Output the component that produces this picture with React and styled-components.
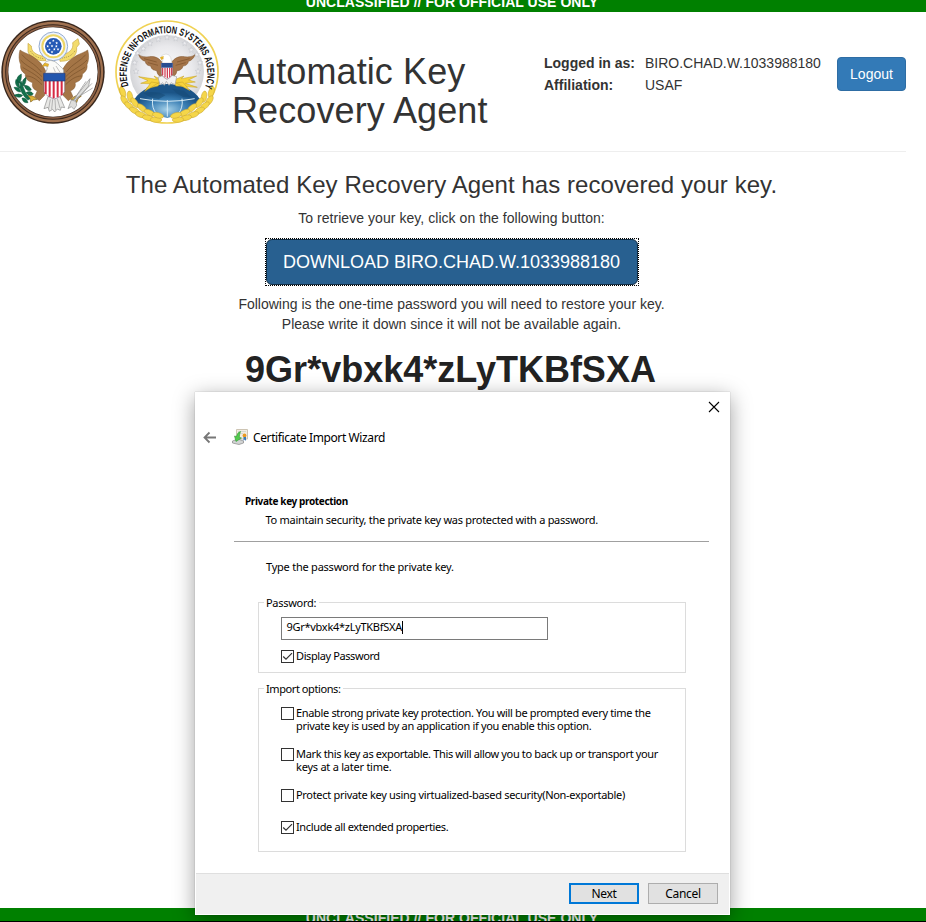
import React from 'react';
import styled, { createGlobalStyle, css } from 'styled-components';

const GlobalStyle = createGlobalStyle`
  * { box-sizing: border-box; }
  html, body { margin: 0; padding: 0; background: #fff; overflow: hidden; }
  body { font-family: "Liberation Sans", Arial, sans-serif; font-size: 14px; line-height: 20px; color: #333; }
`;

const Screen = styled.div`
  position: relative;
  width: 926px;
  height: 922px;
  overflow: hidden;
  display: flex;
  flex-direction: column;
  border-bottom: 1px solid #000;
`;

const Banner = styled.div`
  flex: none;
  height: 20px;
  margin-top: ${(p) => (p.$bottom ? 'auto' : '-8px')};
  margin-bottom: ${(p) => (p.$bottom ? '-7px' : '0')};
  padding-right: 22px;
  background: #008000;
  color: #fff;
  font-weight: bold;
  text-align: center;
  letter-spacing: 0.04px;
`;

const Header = styled.header`
  flex: none;
  display: flex;
  align-items: flex-start;
  width: 906px;
  height: 140px;
  padding: 8px 0 0 1px;
  border-bottom: 1px solid #eee;
`;

const Seals = styled.div`
  display: flex;
  gap: 10px;
  svg { display: block; width: 104px; height: 104px; }
`;

const Title = styled.h1`
  width: 310px;
  margin: 32px 0 0 13px;
  font-size: 36px;
  line-height: 39px;
  font-weight: normal;
  letter-spacing: 0.1px;
`;

const Account = styled.dl`
  display: grid;
  grid-template-columns: 101px 180px;
  row-gap: 2px;
  margin: 33px 0 0 2px;
`;
const Term = styled.dt`font-weight: bold;`;
const Detail = styled.dd`margin: 0;`;

const LogoutButton = styled.button`
  width: 69px;
  height: 34px;
  margin: 37px 0 0 auto;
  padding: 0;
  border: 1px solid #2e6da4;
  border-radius: 4px;
  background: #337ab7;
  color: #fff;
  font: 14px/20px "Liberation Sans", Arial, sans-serif;
`;

const Main = styled.main`
  flex: none;
  display: flex;
  flex-direction: column;
  align-items: center;
  width: 903px;
`;
const Headline = styled.h3`
  margin: 20px 0 10px;
  font-size: 24px;
  line-height: 26px;
  font-weight: normal;
  letter-spacing: 0.06px;
  white-space: nowrap;
`;
const Copy = styled.p`
  margin: 0;
  text-align: center;
  letter-spacing: ${(p) => p.$spacing || '0'};
`;
const FocusRing = styled.div`
  margin: 10px 0 8px;
  border: 1px dotted #000;
`;
const DownloadButton = styled.button`
  display: block;
  width: 372px;
  height: 46px;
  padding: 0;
  border: 1px solid #122b40;
  border-radius: 6px;
  background: #286090;
  color: #fff;
  font: 18px/24px "Liberation Sans", Arial, sans-serif;
`;
const OneTimePassword = styled.div`
  margin: 16px 2px 0 0;
  font-size: 36px;
  line-height: 40px;
  font-weight: bold;
  color: #222;
`;

const Dialog = styled.section`
  position: absolute;
  left: 195px;
  top: 392px;
  width: 535px;
  height: 523px;
  display: flex;
  flex-direction: column;
  padding: 0 1px 1px;
  background: #fff;
  box-shadow: 0 0 1px rgba(0, 0, 0, 0.3), 0 5px 20px rgba(0, 0, 0, 0.38);
  color: #000;
  font-family: "Noto Sans", "Open Sans", sans-serif;
  font-size: 11px;
  line-height: 13px;
`;
const CloseRow = styled.div`
  display: flex;
  justify-content: flex-end;
  height: 32px;
  padding: 9px 9px 0 0;
`;
const WizardTitle = styled.div`
  display: flex;
  align-items: center;
  height: 26px;
  padding-left: 7px;
  font-size: 12px;
  letter-spacing: -0.39px;
  white-space: nowrap;
`;
const BackIcon = styled.svg`width: 13px; height: 13px; margin-right: 16px;`;
const WizardIcon = styled.svg`width: 16px; height: 16px; margin-right: 5px;`;
const Intro = styled.div`
  width: 475px;
  height: 92px;
  margin-left: 38px;
  padding: 45px 0 0 11px;
  border-bottom: 1px solid #a0a0a0;
`;
const StepTitle = styled.h2`
  margin: 0 0 5px;
  font-size: 10px;
  line-height: 13px;
  font-weight: bold;
  letter-spacing: -0.37px;
`;
const line = css`
  display: block;
  white-space: nowrap;
  letter-spacing: ${(p) => p.$spacing || 0}px;
`;
const Line = styled.span`${line}`;
const Indented = styled.div`padding-left: ${(p) => p.$by}px;`;
const Prompt = styled.div`height: 32px; padding: 18px 0 0 70px;`;

const Group = styled.div`
  display: flex;
  flex-direction: column;
  width: 428px;
  height: ${(p) => p.$height}px;
  margin: ${(p) => p.$top}px 0 0 62px;
  padding-left: 22px;
  border: 1px solid #dcdcdc;
`;
const GroupLabel = styled.div`
  flex: none;
  align-self: flex-start;
  margin: -7px 0 0 -17px;
  padding: 0 3px 0 2px;
  background: #fff;
  ${line}
`;
const PasswordField = styled.div`
  flex: none;
  display: flex;
  align-items: flex-start;
  width: 267px;
  height: 23px;
  margin-top: 8px;
  padding: 2px 0 0 4.5px;
  border: 1px solid #7a7a7a;
`;
const Caret = styled.span`width: 1px; height: 13px; margin-top: 1px; background: #000;`;
const Option = styled.label`
  flex: none;
  display: flex;
  gap: 2px;
  height: ${(p) => p.$height || 26}px;
  margin-top: ${(p) => p.$top}px;
`;
const Box = styled.span`
  flex: none;
  display: block;
  width: 13px;
  height: 13px;
  margin-top: 1px;
  border: 1px solid #333;
  background: #fff;
  svg { display: block; width: 11px; height: 11px; }
`;
const Actions = styled.footer`
  display: flex;
  justify-content: flex-end;
  gap: 9px;
  height: 41px;
  margin-top: auto;
  padding: 9px 11px 0 0;
  border-top: 1px solid #dfdfdf;
  background: #f0f0f0;
`;
const DialogButton = styled.button`
  width: 70px;
  height: 21px;
  padding: 0;
  border: ${(p) => (p.$primary ? '2px solid #0078d7' : '1px solid #adadad')};
  background: #e1e1e1;
  color: #000;
  font: 12px/15px "Noto Sans", "Open Sans", sans-serif;
  letter-spacing: -0.3px;
`;

function CheckBox({ checked }) {
  return (
    <Box>
      {checked && (
        <svg viewBox="0 0 11 11" fill="none" stroke="#333" strokeWidth="1.2">
          <path d="M1.200 5.500 4 8.200 10 2.200" />
        </svg>
      )}
    </Box>
  );
}

function star(cx, cy, r) {
  return Array.from({ length: 10 }, (_, i) => {
    const a = (i * Math.PI) / 5 - Math.PI / 2;
    const d = i % 2 ? r * 0.42 : r;
    return `${(cx + d * Math.cos(a)).toFixed(1)},${(cy + d * Math.sin(a)).toFixed(1)}`;
  }).join(' ');
}

function GreatSeal() {
  const wing = 'M140 222C132 196 116 180 92 166C80 160 68 156 60 150C56 164 56 182 62 194C60 206 66 216 76 222C74 234 84 244 98 248C94 260 102 270 112 272L104 290L118 302L134 286Z';
  const feathers = 'M66 164C82 184 104 190 124 216M62 180C80 200 100 204 126 230M68 202C86 214 104 220 126 242M78 228C94 228 108 236 126 254';
  return (
    <svg viewBox="3 60 312 312" role="img" aria-label="Great Seal">
      <circle cx="159" cy="216" r="155" fill="#37261c" />
      <circle cx="159" cy="216" r="147" fill="none" stroke="#a0714f" strokeWidth="7" />
      <circle cx="159" cy="216" r="138" fill="none" stroke="#8c6045" strokeWidth="5" />
      <circle cx="159" cy="216" r="134" fill="#fff" />
      <path d="M84 130L94 138C94 154 104 164 134 170L138 182C108 184 88 172 84 154ZM234 116L218 128C222 148 208 160 178 168L180 184C214 184 232 168 230 142L238 132Z" fill="#f3dc6c" stroke="#c9a742" strokeWidth="2" />
      <path d="M92 154C100 168 114 174 132 176M186 174C204 172 218 166 226 150" fill="none" stroke="#8d7c3c" strokeWidth="2" strokeDasharray="3 3" />
      <circle cx="160" cy="139" r="43" fill="#edf3fb" stroke="#94acd0" strokeWidth="3" />
      <circle cx="160" cy="139" r="33" fill="#fff" stroke="#ecd566" strokeWidth="6" />
      <circle cx="160" cy="139" r="25" fill="#2459b5" />
      {[[160, 122], [150, 129], [170, 129], [143, 139], [156, 138], [169, 139], [148, 149], [163, 148], [174, 148], [156, 156]].map(([x, y]) => (
        <polygon key={`${x}-${y}`} points={star(x, y, 4.5)} fill="#fff" />
      ))}
      <path d={wing} fill="#a47546" stroke="#80582f" strokeWidth="1.5" />
      <path d={feathers} fill="none" stroke="#775029" strokeWidth="2" />
      <g transform="translate(323 0) scale(-1 1)">
        <path d={wing} fill="#a47546" stroke="#80582f" strokeWidth="1.5" />
        <path d={feathers} fill="none" stroke="#775029" strokeWidth="2" />
      </g>
      <path d="M144 290L132 326L144 322L148 334L158 328L164 336L172 327L181 331L184 321L194 323L180 290Z" fill="#e8e8e6" stroke="#888" strokeWidth="2" />
      <path d="M151 298L146 326M158 298L155 328M165 298L167 330M172 296L180 324" stroke="#999" strokeWidth="2" />
      <path d="M134 222C142 208 144 204 138 198L130 196C134 186 144 180 156 182C170 184 176 196 184 202C192 208 192 214 190 224Z" fill="#fbfbf8" stroke="#9aa0a2" strokeWidth="2" />
      <path d="M146 192L134 189L126 200L138 197L144 200Z" fill="#e9b72c" stroke="#a67a1c" strokeWidth="1" />
      <path d="M160 202L166 216M168 198L180 217" stroke="#c2c2c2" strokeWidth="3" />
      <path d="M132 220H194V274Q190 288 163 297Q136 288 132 274Z" fill="#fff" stroke="#6b5476" strokeWidth="1.5" />
      <path d="M137 243V282M149 243V290M161 243V295M173 243V292M185 243V286" stroke="#d62943" strokeWidth="6" />
      <path d="M131 220H195V243H131Z" fill="#2256ae" stroke="#273e73" strokeWidth="2" />
      <path d="M80 286L98 288L112 298L100 300L92 306L90 296ZM244 288L226 288L212 298L224 300L230 308L234 296Z" fill="#ddb038" stroke="#81601e" strokeWidth="2" />
      <g fill="#126f4b" stroke="#0a5237" strokeWidth="1.5">
        <path d="M64 222Q44 232 54 250Q66 244 64 222ZM78 232Q62 242 68 260Q80 250 78 232ZM48 238Q42 254 58 266Q66 250 48 238ZM42 262Q48 276 62 276Q60 260 42 262ZM72 256Q90 256 94 270Q80 278 72 256ZM42 286Q56 278 68 286Q60 298 42 286ZM78 278Q92 270 100 282Q90 292 78 278ZM66 294Q80 292 84 308Q68 310 66 294ZM64 244Q74 280 90 296L84 300Q62 284 56 248Z" />
      </g>
      <g stroke="#8d8d8d" strokeWidth="2" fill="#dededc">
        <path d="M218 302L270 236L266 258L224 306M222 298L258 244M226 302L276 250M220 300L278 264" />
        <path d="M214 300L204 326L214 320L222 328L230 316L228 304Z" />
      </g>
    </svg>
  );
}

function AgencySeal() {
  const wing = 'M490 192C478 172 462 168 448 170C434 172 424 170 416 164C420 176 428 182 436 184C436 192 444 198 452 198C454 208 462 212 470 212C472 224 478 230 488 232Z';
  const laurel = [[368, 276, 70], [374, 302, 55], [388, 318, 40], [404, 332, 28], [422, 344, 18], [444, 353, 10], [468, 359, 3], [390, 290, 80], [404, 308, 55], [426, 324, 42], [448, 338, 25], [474, 346, 15]];
  return (
    <svg viewBox="345 60 312 312" role="img" aria-label="Defense Information Systems Agency">
      <defs>
        <radialGradient id="sky"><stop offset="0" stopColor="#fff" /><stop offset="0.7" stopColor="#e9e9ec" /><stop offset="1" stopColor="#d4d5d8" /></radialGradient>
        <radialGradient id="ocean" cx=".5" cy=".75"><stop offset="0" stopColor="#a4d0e8" /><stop offset=".6" stopColor="#397eb4" /><stop offset="1" stopColor="#1b5487" /></radialGradient>
        <path id="motto" d="M386 258A121 121 0 1 1 616 258" />
      </defs>
      <circle cx="501" cy="216" r="153" fill="#fff" stroke="#f0d253" strokeWidth="5" />
      <circle cx="501" cy="216" r="111" fill="url(#sky)" />
      {[[408, 214], [404, 188], [413, 160], [430, 146], [450, 130], [475, 118], [501, 112], [527, 116], [554, 130], [574, 150], [590, 164], [600, 188], [594, 214]].map(([x, y]) => (
        <polygon key={`${x}-${y}`} points={star(x, y, 9)} fill="#ececef" stroke="#c0c2c8" strokeWidth="1.5" />
      ))}
      <path d="M403 298C422 268 462 252 502 252C542 252 582 268 600 298L566 336L502 354L438 338Z" fill="url(#ocean)" />
      <path d="M430 280C450 274 478 274 496 286L476 298L452 292ZM516 266L552 272L574 292L550 292L530 280Z" fill="#184b77" opacity=".6" />
      <path d="M502 300V350M458 296Q454 324 470 342M546 296Q550 324 534 342M420 296Q502 312 584 296" fill="none" stroke="#d4eaf5" strokeWidth="3" />
      <g fill="#f6d33c" stroke="#c19d24" strokeWidth="1.5">
        <path d="M416 230L470 238L462 228L486 240L474 258L438 266L456 252L422 250L444 242ZM590 228L544 236L552 228L516 242L528 258L592 262L556 250L586 246L566 240Z" />
        <path d="M486 242L434 274L454 246L478 250M516 242L570 272L548 246L520 250" />
      </g>
      <g fill="#f5d649" stroke="#c9a735" strokeWidth="1.6">
        {laurel.map(([x, y, r]) => <ellipse key={`l${x}`} cx={x} cy={y} rx="17" ry="8" transform={`rotate(${r} ${x} ${y})`} />)}
        {laurel.map(([x, y, r]) => <ellipse key={`r${x}`} cx={1002 - x} cy={y} rx="17" ry="8" transform={`rotate(${-r} ${1002 - x} ${y})`} />)}
      </g>
      <path d={wing} fill="#a5754a" stroke="#7c522b" strokeWidth="1.5" />
      <path d="M432 176L470 186M444 188L474 196" stroke="#7c522b" strokeWidth="2" />
      <g transform="translate(1001 0) scale(-1 1)">
        <path d={wing} fill="#a5754a" stroke="#7c522b" strokeWidth="1.5" />
        <path d="M432 176L470 186M444 188L474 196" stroke="#7c522b" strokeWidth="2" />
      </g>
      <path d="M486 190L490 174L482 174Q484 162 498 162Q508 162 512 172L516 190Z" fill="#fff" stroke="#c6c6c6" strokeWidth="1.5" />
      <path d="M491 168L480 172L484 180L490 176Z" fill="#e2b32c" />
      <path d="M474 232L480 254L488 248L493 256L499 244L507 256L513 248L525 254L530 230L501 222Z" fill="#f2f2f2" stroke="#9f9f9f" strokeWidth="2" />
      <path d="M484 190H518V222Q514 232 501 238Q488 232 484 222Z" fill="#fff" stroke="#6b4a62" strokeWidth="1.5" />
      <path d="M488 203V226M495 203V232M502 203V235M509 203V232M515 203V226" stroke="#cc3348" strokeWidth="3.5" />
      <path d="M484 189H518V203H484Z" fill="#294d91" />
      <text fontFamily="Liberation Sans, sans-serif" fontSize="31" fontWeight="bold" fill="#111">
        <textPath href="#motto" textLength="462" lengthAdjust="spacingAndGlyphs">DEFENSE INFORMATION SYSTEMS AGENCY</textPath>
      </text>
    </svg>
  );
}

export default function App() {
  return (
    <Screen>
      <GlobalStyle />
      <Banner>UNCLASSIFIED // FOR OFFICIAL USE ONLY</Banner>
      <Header>
        <Seals><GreatSeal /><AgencySeal /></Seals>
        <Title>Automatic Key<br />Recovery Agent</Title>
        <Account>
          <Term>Logged in as:</Term><Detail>BIRO.CHAD.W.1033988180</Detail>
          <Term>Affiliation:</Term><Detail>USAF</Detail>
        </Account>
        <LogoutButton>Logout</LogoutButton>
      </Header>
      <Main>
        <Headline>The Automated Key Recovery Agent has recovered your key.</Headline>
        <Copy $spacing="0.05px">To retrieve your key, click on the following button:</Copy>
        <FocusRing><DownloadButton>DOWNLOAD BIRO.CHAD.W.1033988180</DownloadButton></FocusRing>
        <Copy>Following is the one-time password you will need to restore your key.<br />Please write it down since it will not be available again.</Copy>
        <OneTimePassword>9Gr*vbxk4*zLyTKBfSXA</OneTimePassword>
      </Main>
      <Banner $bottom>UNCLASSIFIED // FOR OFFICIAL USE ONLY</Banner>

      <Dialog>
        <CloseRow>
          <svg width="12" height="12" viewBox="0 0 12 12" stroke="#000" strokeWidth="1.1"><path d="M1 1 11 11M11 1 1 11" /></svg>
        </CloseRow>
        <WizardTitle>
          <BackIcon viewBox="0 0 13 13" fill="none" stroke="#777" strokeWidth="1.8"><path d="M13 6.500H1.500M6.500 1.500l-5 5 5 5" /></BackIcon>
          <WizardIcon viewBox="0 0 16 16">
            <path d="M4.500.5H15.500V10H4.500Z" fill="#f1ede2" stroke="#cdc4b3" />
            <path d="M6 2.500H14M6 4.500H11" stroke="#d5d8cf" />
            <circle cx="12.500" cy="6.500" r="1.900" fill="#e99a22" />
            <path d="M11.500 8H14V12L12.700 10.500 11.500 12Z" fill="#3978b8" />
            <path d="M.5 12 6 10 11.500 12V14L7 15.500 .5 14Z" fill="#d2d4d4" stroke="#888" strokeWidth=".7" />
            <path d="M8.500 2.500Q5.500 3 4.500 7.500L2.500 7 4 12.500 9.500 9 7.300 8.300Q7.500 5 8.500 2.500Z" fill="#53cb4c" stroke="#35983b" strokeWidth=".6" />
          </WizardIcon>
          Certificate Import Wizard
        </WizardTitle>
        <Intro>
          <StepTitle>Private key protection</StepTitle>
          <Indented $by={20.500}><Line $spacing={-0.28}>To maintain security, the private key was protected with a password.</Line></Indented>
        </Intro>
        <Prompt><Line $spacing={-0.23}>Type the password for the private key.</Line></Prompt>

        <Group $height={71} $top={28}>
          <GroupLabel $spacing={-0.28}>Password:</GroupLabel>
          <PasswordField><Line $spacing={-0.28}>9Gr*vbxk4*zLyTKBfSXA</Line><Caret /></PasswordField>
          <Option $top={9} $height={15}><CheckBox checked /><Line $spacing={-0.4}>Display Password</Line></Option>
        </Group>

        <Group $height={164} $top={15}>
          <GroupLabel $spacing={-0.42}>Import options:</GroupLabel>
          <Option $top={11}>
            <CheckBox />
            <span>
              <Line $spacing={-0.338}>Enable strong private key protection. You will be prompted every time the</Line>
              <Line $spacing={-0.33}>private key is used by an application if you enable this option.</Line>
            </span>
          </Option>
          <Option $top={15}>
            <CheckBox />
            <span>
              <Line $spacing={-0.348}>Mark this key as exportable. This will allow you to back up or transport your</Line>
              <Line $spacing={-0.24}>keys at a later time.</Line>
            </span>
          </Option>
          <Option $top={15}><CheckBox /><Line $spacing={-0.31}>Protect private key using virtualized-based security(Non-exportable)</Line></Option>
          <Option $top={6} $height={15}><CheckBox checked /><Line $spacing={-0.36}>Include all extended properties.</Line></Option>
        </Group>

        <Actions>
          <DialogButton $primary>Next</DialogButton>
          <DialogButton>Cancel</DialogButton>
        </Actions>
      </Dialog>
    </Screen>
  );
}
